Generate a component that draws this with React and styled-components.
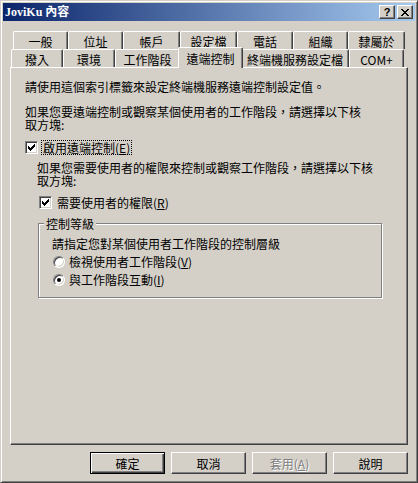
import React from "react";
import styled, { createGlobalStyle } from "styled-components";

const FACE = "#d4d0c8";
const FONT = `"Noto Sans CJK TC", "Noto Sans CJK SC", "Liberation Sans", sans-serif`;

const GlobalStyle = createGlobalStyle`
  html, body {
    margin: 0;
    padding: 0;
    background: ${FACE};
  }
  body {
    font-family: ${FONT};
    font-size: 12px;
    color: #000;
  }
`;

const backTabs = [
  { label: "一般", w: 55 },
  { label: "位址", w: 55 },
  { label: "帳戶", w: 57 },
  { label: "設定檔", w: 57 },
  { label: "電話", w: 56 },
  { label: "組織", w: 55 },
  { label: "隸屬於", w: 57 },
];

const frontTabs = [
  { label: "撥入", w: 52 },
  { label: "環境", w: 52 },
  { label: "工作階段", w: 65 },
  { label: "遠端控制", w: 61, active: true },
  { label: "終端機服務設定檔", w: 108 },
  { label: "COM+", w: 55 },
];

const CheckMark = () => (
  <svg width="7" height="7" viewBox="0 0 7 7" shapeRendering="crispEdges">
    {[2, 3, 4, 3, 2, 1, 0].map((y, x) => (
      <rect key={x} x={x} y={y} width="1" height="3" fill="#000" />
    ))}
  </svg>
);

const CloseGlyph = () => (
  <svg width="8" height="7" viewBox="0 0 8 7" shapeRendering="crispEdges">
    {[0, 1, 2, 3, 4, 5, 6].map((i) => (
      <g key={i}>
        <rect x={i} y={i} width="2" height="1" fill="#000" />
        <rect x={6 - i} y={i} width="2" height="1" fill="#000" />
      </g>
    ))}
  </svg>
);

const Checkbox = ({ checked, children, focused, indent }) => (
  <CheckRow $indent={indent}>
    <CheckBox>{checked && <CheckMark />}</CheckBox>
    <CheckLabel $focused={focused}>{children}</CheckLabel>
  </CheckRow>
);

const Radio = ({ checked, children }) => (
  <RadioRow>
    <RadioCircle>{checked && <RadioDot />}</RadioCircle>
    <span>{children}</span>
  </RadioRow>
);

const App = () => {
  return (
    <>
      <GlobalStyle />
      <Window>
        <TitleBar>
          <TitleText>JoviKu 內容</TitleText>
          <CaptionButton>
            <HelpGlyph>?</HelpGlyph>
          </CaptionButton>
          <CaptionButton $gap={2}>
            <CloseGlyph />
          </CaptionButton>
        </TitleBar>

        <Body>
          <TabStrip>
            <TabRow $offset={3}>
              {backTabs.map((t) => (
                <Tab key={t.label} $w={t.w}>
                  {t.label}
                </Tab>
              ))}
            </TabRow>
            <TabRow $offset={1}>
              {frontTabs.map((t) => (
                <Tab key={t.label} $w={t.w} $active={t.active}>
                  {t.label}
                </Tab>
              ))}
            </TabRow>
          </TabStrip>

          <Panel>
            <Para>請使用這個索引標籤來設定終端機服務遠端控制設定值。</Para>
            <Para $mt={12}>
              如果您要遠端控制或觀察某個使用者的工作階段，請選擇以下核取方塊:
            </Para>
            <Checkbox checked focused>
              啟用遠端控制(<u>E</u>)
            </Checkbox>
            <Para $mt={7} $indent={12}>
              如果您需要使用者的權限來控制或觀察工作階段，請選擇以下核取方塊:
            </Para>
            <Checkbox checked indent={14}>
              需要使用者的權限(<u>R</u>)
            </Checkbox>

            <Group>
              <Legend>控制等級</Legend>
              <GroupText>請指定您對某個使用者工作階段的控制層級</GroupText>
              <Radio>
                檢視使用者工作階段(<u>V</u>)
              </Radio>
              <Radio checked>
                與工作階段互動(<u>I</u>)
              </Radio>
            </Group>
          </Panel>

          <ButtonRow>
            <PushButton $default>確定</PushButton>
            <PushButton>取消</PushButton>
            <PushButton disabled>
              套用(<u>A</u>)
            </PushButton>
            <PushButton>說明</PushButton>
          </ButtonRow>
        </Body>
      </Window>
    </>
  );
};

export default App;

const Window = styled.div`
  width: 418px;
  height: 483px;
  box-sizing: border-box;
  background: ${FACE};
  border: 1px solid;
  border-color: ${FACE} #404040 #404040 ${FACE};
  box-shadow: inset 1px 1px #fff, inset -1px -1px #808080;
  padding: 2px;
  display: flex;
  flex-direction: column;
`;

const TitleBar = styled.div`
  height: 18px;
  display: flex;
  align-items: center;
  padding: 0 2px 0 2px;
  background: linear-gradient(to right, #0a246a, #a6caf0);
`;

const TitleText = styled.div`
  flex: 1;
  color: #fff;
  font-weight: bold;
  font-size: 12px;
  line-height: 18px;
  font-family: "Liberation Serif", "Noto Sans CJK TC", serif;
`;

const CaptionButton = styled.div`
  width: 16px;
  height: 14px;
  box-sizing: border-box;
  margin-left: ${(p) => p.$gap || 0}px;
  background: ${FACE};
  border: 1px solid;
  border-color: #fff #404040 #404040 #fff;
  box-shadow: inset -1px -1px #808080;
  display: flex;
  align-items: center;
  justify-content: center;
`;

const HelpGlyph = styled.span`
  font-family: "Liberation Sans", sans-serif;
  font-weight: bold;
  font-size: 11px;
  line-height: 11px;
`;

const Body = styled.div`
  flex: 1;
  display: flex;
  flex-direction: column;
  padding: 10px 7px 6px 7px;
`;

const TabStrip = styled.div`
  display: flex;
  flex-direction: column;
  height: 36px;
`;

const TabRow = styled.div`
  display: flex;
  align-items: flex-start;
  height: 18px;
  padding-left: ${(p) => p.$offset}px;
`;

const Tab = styled.div`
  box-sizing: border-box;
  flex: none;
  width: ${(p) => (p.$active ? p.$w + 4 : p.$w)}px;
  height: ${(p) => (p.$active ? 21 : 18)}px;
  margin: ${(p) => (p.$active ? "-2px -2px 0 -2px" : "0")};
  position: relative;
  z-index: ${(p) => (p.$active ? 2 : 1)};
  background: ${FACE};
  border-top: 1px solid #fff;
  border-left: 1px solid #fff;
  border-right: 1px solid #404040;
  border-radius: 2px 2px 0 0;
  box-shadow: inset -1px 0 #808080;
  display: flex;
  align-items: center;
  justify-content: center;
  font-size: 12px;
  line-height: 13px;
  white-space: nowrap;
  padding-top: 1px;
`;

const Panel = styled.div`
  height: 378px;
  box-sizing: border-box;
  border: 1px solid;
  border-color: #fff #404040 #404040 #fff;
  box-shadow: inset -1px -1px #808080;
  padding: 12px 12px 0 14px;
  display: flex;
  flex-direction: column;
  align-items: flex-start;
`;

const Para = styled.div`
  max-width: 340px;
  margin-top: ${(p) => p.$mt || 0}px;
  margin-left: ${(p) => p.$indent || 0}px;
  line-height: 13px;
`;

const CheckRow = styled.div`
  display: flex;
  align-items: center;
  height: 13px;
  line-height: 13px;
  margin-top: ${(p) => (p.$indent ? 9 : 10)}px;
  margin-left: ${(p) => p.$indent || 0}px;
`;

const CheckBox = styled.div`
  width: 13px;
  height: 13px;
  box-sizing: border-box;
  background: #fff;
  border: 1px solid;
  border-color: #808080 #fff #fff #808080;
  box-shadow: inset 1px 1px #404040, inset -1px -1px ${FACE};
  display: flex;
  align-items: center;
  justify-content: center;
  margin-right: 4px;
`;

const CheckLabel = styled.span`
  padding: 0 1px;
  outline: ${(p) => (p.$focused ? "1px dotted #000" : "none")};
`;

const Group = styled.fieldset`
  margin: 8px 0 0 13px;
  width: 344px;
  box-sizing: border-box;
  border: 1px solid #808080;
  box-shadow: inset 1px 1px #fff, 1px 1px #fff;
  padding: 7px 0 11px 13px;
  min-inline-size: 0;
`;

const Legend = styled.legend`
  margin-left: -8px;
  padding: 0 2px;
  line-height: 13px;
  background: ${FACE};
`;

const GroupText = styled.div`
  line-height: 13px;
`;

const RadioRow = styled.div`
  display: flex;
  align-items: center;
  height: 13px;
  line-height: 13px;
  margin: 5px 0 0 1px;
`;

const RadioCircle = styled.div`
  width: 12px;
  height: 12px;
  box-sizing: border-box;
  border-radius: 50%;
  background: #fff;
  border: 1px solid;
  border-color: #808080 #fff #fff #808080;
  box-shadow: inset 1px 1px #404040, inset -1px -1px ${FACE};
  display: flex;
  align-items: center;
  justify-content: center;
  margin-right: 4px;
`;

const RadioDot = styled.div`
  width: 4px;
  height: 4px;
  border-radius: 50%;
  background: #000;
`;

const ButtonRow = styled.div`
  display: flex;
  justify-content: flex-end;
  gap: 6px;
  margin-top: 7px;
`;

const PushButton = styled.button`
  width: 75px;
  height: 22px;
  box-sizing: border-box;
  padding: 0;
  background: ${FACE};
  font-family: ${FONT};
  font-size: 12px;
  line-height: 13px;
  color: ${(p) => (p.disabled ? "#808080" : "#000")};
  text-shadow: ${(p) => (p.disabled ? "1px 1px #fff" : "none")};
  border: 1px solid;
  border-color: ${(p) => (p.$default ? "#000" : "#fff #404040 #404040 #fff")};
  box-shadow: ${(p) =>
    p.$default
      ? "inset 1px 1px #fff, inset -1px -1px #404040, inset -2px -2px #808080"
      : "inset -1px -1px #808080"};
`;
